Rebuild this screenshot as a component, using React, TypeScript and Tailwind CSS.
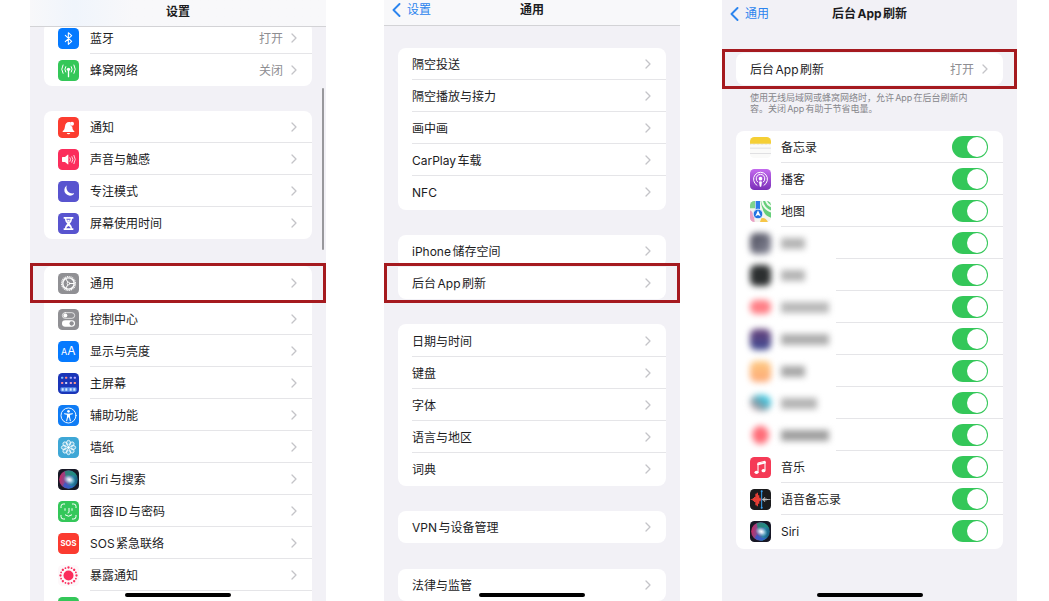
import { useId, type ReactNode } from "react";

function Tile({ color, children }: { color: string; children?: ReactNode }) {
  return (
    <svg viewBox="0 0 63 63" className="size-[21px] shrink-0" aria-hidden="true">
      <rect width="63" height="63" rx="13" fill={color} />
      {children}
    </svg>
  );
}

const line = {
  fill: "none",
  stroke: "#fff",
  strokeWidth: 3,
  strokeLinecap: "round" as const,
  strokeLinejoin: "round" as const,
};

const BluetoothIcon = () => (
  <Tile color="#057aff">
    <path d="M22 22 41 40 31 49V14L41 23 22 41" {...line} strokeWidth={3.2} />
  </Tile>
);

const CellularIcon = () => (
  <Tile color="#34c759">
    <circle cx="31.500" cy="28" r="5" fill="#fff" />
    <path d="M31.500 30V50" {...line} strokeWidth={4} />
    <path d="M23 20q-5 8 0 16M40 20q5 8 0 16" {...line} strokeWidth={3} />
    <path d="M15 15q-8 13 0 25M48 15q8 13 0 25" {...line} strokeWidth={3} />
  </Tile>
);

const BellIcon = () => (
  <Tile color="#fc3d30">
    <path d="M14 43c5-4 6-8 7-15 1-8 5-13 12-13 2 0 4 0 5 1a9 9 0 0 0 5 13c0 7 2 10 6 14v2H14z" fill="#fff" />
    <path d="M26 48h11q-2 4-5.500 4T26 48z" fill="#fff" />
    <circle cx="42" cy="20" r="6" fill="#fff" />
  </Tile>
);

const SoundIcon = () => (
  <Tile color="#fb2d5c">
    <path d="M12 26q0-2 2-2h7l8-7q2-1 2 1v27q0 2-2 1l-8-7h-7q-2 0-2-2z" fill="#fff" />
    <path d="M36 26q4 5 0 11M42 23q6 8 0 17M48 19q8 12 0 25" {...line} strokeWidth={2.4} />
  </Tile>
);

const MoonIcon = () => (
  <Tile color="#5854cf">
    <path d="M26 14c-3 12 5 25 21 23 1 0 1 1 1 2a17 17 0 1 1-23-25c1-1 1-1 1 0z" fill="#fff" />
  </Tile>
);

const HourglassIcon = () => (
  <Tile color="#5854cf">
    <path d="M17 12h29v5h-4c0 7-3 11-7 15 4 4 7 8 7 14h4v5H17v-5h4c0-6 3-10 7-14-4-4-7-8-7-15h-4z" fill="#fff" />
    <path d="M25 17h13q-1 6-6.500 11Q26 23 25 17zM25 46q1-5 6.500-7 5.500 2 6.500 7z" fill="#5854cf" />
    <path d="M27 20h9q-1 4-4.500 7Q28 24 27 20z" fill="#fff" />
  </Tile>
);

const GearIcon = () => (
  <Tile color="#909094">
    <circle cx="31.500" cy="31.500" r="20.500" fill="none" stroke="#fff" strokeWidth="4" strokeDasharray="3.300 2.067" />
    <circle cx="31.500" cy="31.500" r="17" fill="none" stroke="#fff" strokeWidth="4" />
    <circle cx="31.500" cy="31.500" r="4" {...line} strokeWidth={2.500} />
    <path d="M35.500 31.500H47M29.500 28 24 18M29.500 35 24 45" {...line} strokeWidth={3} />
  </Tile>
);

const ControlIcon = () => (
  <Tile color="#909094">
    <rect x="13" y="11" width="37" height="17" rx="8.500" {...line} strokeWidth={2.200} />
    <circle cx="22" cy="19.500" r="6" fill="#fff" />
    <rect x="12" y="34" width="39" height="19" rx="9.500" fill="#fff" />
    <circle cx="41" cy="43.500" r="6.500" fill="#909094" />
  </Tile>
);

const DisplayIcon = () => (
  <Tile color="#057aff">
    <text x="9" y="43" fill="#fff" fontSize="27" fontWeight="400">A</text>
    <text x="28" y="43" fill="#fff" fontSize="36" fontWeight="400">A</text>
  </Tile>
);

const dots = [
  [9, 11, "#7fc2ff"], [21, 11, "#ff8b86"], [35, 11, "#a9b2ff"], [47, 11, "#b7a5ff"],
  [9, 27, "#ff8c9b"], [21, 27, "#c9d4ff"], [35, 27, "#e5a0c8"], [47, 27, "#ff9a80"],
] as const;

const HomeIcon = () => (
  <Tile color="#1a35b8">
    {dots.map(([x, y, fill]) => (
      <rect key={`${x}-${y}`} x={x} y={y} width="7" height="6" rx="2" fill={fill} />
    ))}
    <rect x="7" y="43" width="49" height="13" rx="4" fill="#5a8cec" />
    <path d="M11 49.500h6M22 49.500h6M35 49.500h6M46 49.500h6" stroke="#d3ebff" strokeWidth="7" />
  </Tile>
);

const AccessibilityIcon = () => (
  <Tile color="#0f7cf5">
    <circle cx="31.500" cy="31.500" r="22.500" {...line} strokeWidth={2.800} />
    <circle cx="31.500" cy="19" r="4" fill="#fff" />
    <path d="M20 26q11.500 3 23 0M28.500 28v9L26 47M34.500 28v9L37 47" {...line} strokeWidth={3.200} />
    <path d="M28 26.500h7v11h-7z" fill="#fff" />
  </Tile>
);

const WallpaperIcon = () => (
  <Tile color="#3ea7d6">
    {[0, 45, 90, 135, 180, 225, 270, 315].map((angle) => (
      <ellipse
        key={angle}
        cx="31.500"
        cy="18"
        rx="6"
        ry="8"
        transform={`rotate(${angle} 31.500 31.500)`}
        fill="#fff"
        fillOpacity=".2"
        stroke="#fff"
        strokeWidth="2.400"
      />
    ))}
    <circle cx="31.500" cy="31.500" r="5.500" fill="#fff" stroke="#3ea7d6" strokeWidth="2" />
  </Tile>
);

function SiriIcon() {
  const id = useId();
  return (
    <Tile color="#171725">
      <defs>
        <linearGradient id={`${id}a`} x1="0" y1=".4" x2="1" y2=".6">
          <stop offset="0" stopColor="#c92860" />
          <stop offset=".45" stopColor="#6a5aa6" />
          <stop offset=".7" stopColor="#2c86a8" />
          <stop offset="1" stopColor="#175b7c" />
        </linearGradient>
        <radialGradient id={`${id}b`}>
          <stop offset="0" stopColor="#fff" />
          <stop offset=".35" stopColor="#d6e6f4" stopOpacity=".85" />
          <stop offset="1" stopColor="#8ec9e0" stopOpacity="0" />
        </radialGradient>
      </defs>
      <circle cx="31.500" cy="31.500" r="28" fill={`url(#${id}a)`} />
      <path d="M20 7a27 27 0 0 1 37 17C45 14 33 20 24 27z" fill="#1f8f78" opacity=".8" />
      <path d="M14 52a27 27 0 0 0 38-3c-13 5-24 0-31-9z" fill="#315bd0" opacity=".75" />
      <ellipse cx="34" cy="32" rx="19" ry="14" transform="rotate(25 34 32)" fill={`url(#${id}b)`} />
    </Tile>
  );
}

const FaceIdIcon = () => (
  <Tile color="#34c759">
    <path
      d="M9 20v-4q0-7 7-7h4M43 9h4q7 0 7 7v4M54 43v4q0 7-7 7h-4M20 54h-4q-7 0-7-7v-4M21 23v5M42 23v5M33 22v11q0 3-3 3M22 42q9.500 8 19 0"
      {...line}
    />
  </Tile>
);

const SosIcon = () => (
  <Tile color="#fb3b30">
    <text x="31.500" y="40" fill="#fff" fontSize="23" fontWeight="700" textAnchor="middle">SOS</text>
  </Tile>
);

const ExposureIcon = () => (
  <Tile color="#fdf8fa">
    <circle cx="31.500" cy="31.500" r="15" fill="#fb2d5c" />
    {Array.from({ length: 16 }, (_, i) => (
      <circle
        key={i}
        cx="31.500"
        cy="7.500"
        r={i % 2 ? 2.7 : 3.5}
        transform={`rotate(${i * 22.5} 31.500 31.500)`}
        fill="#fb2d5c"
      />
    ))}
  </Tile>
);

const BatteryIcon = () => (
  <Tile color="#34c759">
    <rect x="10" y="21" width="40" height="21" rx="6" fill="#fff" />
  </Tile>
);

const NotesIcon = () => (
  <Tile color="#fafaf9">
    <path d="M0 20v-7A13 13 0 0 1 13 0h37a13 13 0 0 1 13 13v7z" fill="#f5cf35" />
    <path d="M0 33.500h63M0 49.500h63" stroke="#d3d3d6" strokeWidth="2" />
    <path d="M1 21.500h61" stroke="#cbb886" strokeWidth="1.500" strokeDasharray="2 2" />
  </Tile>
);

function PodcastIcon() {
  const id = useId();
  return (
    <Tile color={`url(#${id})`}>
      <defs>
        <linearGradient id={id} x1="0" y1="0" x2="0" y2="1">
          <stop offset="0" stopColor="#c46aee" />
          <stop offset="1" stopColor="#7a2fb8" />
        </linearGradient>
      </defs>
      <path d="M21 49a21 21 0 1 1 21 0" {...line} />
      <path d="M23 39a13 13 0 1 1 17 0" {...line} />
      <circle cx="31.500" cy="29" r="5.500" fill="#fff" />
      <path d="M27 38q4.500-3 9 0l-2 14q-2.500 3-5 0z" fill="#fff" />
    </Tile>
  );
}

function MapsIcon() {
  const id = useId();
  return (
    <Tile color="#f4f4ee">
      <clipPath id={id}>
        <rect width="63" height="63" rx="13" />
      </clipPath>
      <g clipPath={`url(#${id})`}>
        <path d="M32 0h31v50q-14-3-21-16T32 0z" fill="#66cf7a" />
        <path d="M36 0q4 22 27 32M48 0q4 11 15 16" stroke="#f2faf0" strokeWidth="6" fill="none" />
        <path d="M0 0h15v22H0z" fill="#7ed28d" />
        <path d="M0 28q12 4 14 35H0z" fill="#e9a0c5" />
        <path d="M34 52q12-4 20 11H30z" fill="#f6c648" />
        <path d="M17 0h13v32H17z" fill="#2c7be8" />
        <circle cx="24" cy="39" r="14.500" fill="#2374e1" stroke="#fff" strokeWidth="2.500" />
        <path d="m24 28 8 18-8-4-8 4z" fill="#fff" />
      </g>
    </Tile>
  );
}

const MusicIcon = () => (
  <Tile color="#f53a56">
    <path d="M24 45V18l21-5v26" {...line} strokeWidth={3.200} />
    <path d="M24 22l21-5" {...line} strokeWidth={5} />
    <ellipse cx="19.500" cy="46" rx="6" ry="5" fill="#fff" />
    <ellipse cx="40.500" cy="41" rx="6" ry="5" fill="#fff" />
  </Tile>
);

const VoiceIcon = () => (
  <Tile color="#1b1b1d">
    <path d="M2 31.500h32" stroke="#ee4036" strokeWidth="2.400" />
    <path d="M10 27v9M14 24v15M18 14v35M22 11v41M26 19v25M30 26v11" stroke="#ee4036" strokeWidth="3.800" />
    <path d="M40 27v9M44 24v15M48 28v7M52 30v3M36 31.500h25" stroke="#d8d8d8" strokeWidth="2.200" />
    <path d="M35 5v53" stroke="#3aa0f0" strokeWidth="3" />
    <circle cx="35" cy="7" r="3" fill="#3aa0f0" />
    <circle cx="35" cy="56" r="3" fill="#3aa0f0" />
  </Tile>
);

const Chevron = () => (
  <svg viewBox="0 0 6 10" className="h-2.5 w-1.5 shrink-0" aria-hidden="true">
    <path d="m1 1 4 4-4 4" fill="none" stroke="#c4c4c8" strokeWidth="1.300" strokeLinecap="round" strokeLinejoin="round" />
  </svg>
);

type RowProps = { icon?: ReactNode; label?: string; value?: string; last?: boolean };

function Row({ icon, label, value, last }: RowProps) {
  return (
    <button type="button" aria-label={label ? undefined : "电池"} className="flex h-8 w-full items-center gap-[11px] pl-3.5 text-left">
      {icon}
      <span className={`flex flex-1 items-center gap-2 self-stretch border-b pr-[15px] ${last ? "border-transparent" : "border-[#e5e5e8]"}`}>
        <span className="flex-1 pt-0.5">{label}</span>
        {value && <span className="pt-0.5 text-[#8e8e92]">{value}</span>}
        <Chevron />
      </span>
    </button>
  );
}

const Card = ({ rows, className = "rounded-lg" }: { rows: RowProps[]; className?: string }) => (
  <div className={`mx-3.5 bg-white ${className}`}>
    {rows.map((row, i) => (
      <Row key={i} {...row} last={i === rows.length - 1} />
    ))}
  </div>
);

const Highlight = ({ row, className = "", inner = "" }: { row: RowProps; className?: string; inner?: string }) => (
  <div className={`relative border-3 border-[#a51a1f] bg-[#f2f1f6] ${className}`}>
    <div className={`mx-[11px] bg-white ${inner}`}>
      <Row {...row} last />
    </div>
  </div>
);

const Back = ({ children }: { children: string }) => (
  <a href="#" className="absolute left-2 flex items-center gap-1.5 text-[#2b84ee]">
    <svg viewBox="0 0 9 14" className="h-3.5 w-[9px]" aria-hidden="true">
      <path d="M7.500 1 1.500 7l6 6" fill="none" stroke="currentColor" strokeWidth="1.900" strokeLinecap="round" strokeLinejoin="round" />
    </svg>
    {children}
  </a>
);

const Phone = ({ className, children }: { className: string; children: ReactNode }) => (
  <section className={`relative flex h-screen min-w-0 flex-col overflow-hidden bg-[#f2f1f6] ${className}`}>
    {children}
    <div className="absolute bottom-1 left-1/2 h-1 w-[106px] -translate-x-1/2 rounded-full bg-black" />
  </section>
);

const apps: { name: string; icon: ReactNode }[] = [
  { name: "备忘录", icon: <NotesIcon /> },
  { name: "播客", icon: <PodcastIcon /> },
  { name: "地图", icon: <MapsIcon /> },
];

const hiddenApps = [
  { tone: "h-[21px] rounded-md bg-linear-to-br from-[#4c4d5c] to-[#8b8c9b]", text: "w-6 bg-[#b4b4b4]" },
  { tone: "h-[21px] rounded-md bg-[#2c2f30]", text: "w-6 bg-[#b4b4b4]" },
  { tone: "h-3.5 rounded-md bg-[#ff7f86]", text: "w-12 bg-[#b9b9b9]" },
  { tone: "h-[21px] rounded-md bg-linear-to-b from-[#653f78] to-[#3d4c94]", text: "w-12 bg-[#adadad]" },
  { tone: "h-[21px] rounded-md bg-linear-to-b from-[#fdc981] to-[#fda877]", text: "w-6 bg-[#a8a8a8]" },
  { tone: "h-4 rounded-full bg-linear-to-bl from-[#3cc4dd] from-30% via-[#7d98a4] via-60% to-[#fdc9c9]", text: "w-9 bg-[#b4b4b4]" },
  { tone: "h-[18px] rounded-full border-x-2 border-white bg-[#ff6d78] bg-clip-padding", text: "w-12 bg-[#9f9f9f]" },
];

const bottomApps: { name: string; icon: ReactNode }[] = [
  { name: "音乐", icon: <MusicIcon /> },
  { name: "语音备忘录", icon: <VoiceIcon /> },
  { name: "Siri", icon: <SiriIcon /> },
];

const Toggle = (props: { label?: string }) => (
  <input
    type="checkbox"
    role="switch"
    defaultChecked
    aria-label={props.label}
    className="h-[22px] w-9 shrink-0 appearance-none rounded-full bg-[#e9e9eb] p-px before:block before:size-5 before:rounded-full before:bg-white checked:bg-[#34c759] checked:before:ml-3.5"
  />
);

const AppRow = ({ name, icon, last }: { name: string; icon: ReactNode; last?: boolean }) => (
  <label className="flex h-8 items-center gap-2.5 pl-3.5">
    {icon}
    <span className={`flex flex-1 items-center justify-between self-stretch border-b pr-[15px] ${last ? "border-transparent" : "border-[#e5e5e8]"}`}>
      <span className="pt-0.5">{name}</span>
      <Toggle />
    </span>
  </label>
);

const HiddenRow = ({ tone, text }: { tone: string; text: string }) => (
  <div className="flex h-8 items-center pl-3.5">
    <div className="flex w-[86px] items-center gap-2.5">
      <div className={`w-[21px] blur-[3px] ${tone}`} />
      <div className={`h-[11px] blur-[3px] ${text}`} />
    </div>
    <div className="flex flex-1 items-center justify-end self-stretch border-b border-[#e5e5e8] pr-[15px]">
      <Toggle label="后台刷新" />
    </div>
  </div>
);

export default function App() {
  return (
    <main className="flex h-screen overflow-hidden bg-white pr-8 pl-[30px] font-['Inter','Noto_Sans_CJK_SC',sans-serif] text-xs leading-4 text-[#1c1c1e] [text-autospace:normal]" lang="zh-CN">
      <Phone className="mr-[58px] flex-[296_1_0%]">
        <header className="relative z-10 flex h-[27px] shrink-0 items-center justify-center border-b border-[#d3d3d6] bg-linear-to-r from-[#f8f8fa] via-[#f0f5fc] via-15% to-[#f8f8fa] to-35% pb-1">
          <h1 className="pt-0.5 font-bold">设置</h1>
        </header>
        <Card
          className="-mt-[5px] rounded-lg"
          rows={[
            { icon: <BluetoothIcon />, label: "蓝牙", value: "打开" },
            { icon: <CellularIcon />, label: "蜂窝网络", value: "关闭" },
          ]}
        />
        <Card
          className="mt-[25px] rounded-lg"
          rows={[
            { icon: <BellIcon />, label: "通知" },
            { icon: <SoundIcon />, label: "声音与触感" },
            { icon: <MoonIcon />, label: "专注模式" },
            { icon: <HourglassIcon />, label: "屏幕使用时间" },
          ]}
        />
        <Highlight className="mt-6" inner="rounded-t-lg py-px" row={{ icon: <GearIcon />, label: "通用" }} />
        <Card
          className=""
          rows={[
            { icon: <ControlIcon />, label: "控制中心" },
            { icon: <DisplayIcon />, label: "显示与亮度" },
            { icon: <HomeIcon />, label: "主屏幕" },
            { icon: <AccessibilityIcon />, label: "辅助功能" },
            { icon: <WallpaperIcon />, label: "墙纸" },
            { icon: <SiriIcon />, label: "Siri与搜索" },
            { icon: <FaceIdIcon />, label: "面容ID与密码" },
            { icon: <SosIcon />, label: "SOS紧急联络" },
            { icon: <ExposureIcon />, label: "暴露通知" },
            { icon: <BatteryIcon /> },
          ]}
        />
        <div className="absolute top-[88px] right-0.5 h-[162px] w-0.5 rounded-full bg-[#98989c]" />
      </Phone>

      <Phone className="mr-[42px] flex-[296_1_0%]">
        <header className="relative flex h-[26px] shrink-0 items-center justify-center border-b border-[#d3d3d6] bg-[#f8f8fa] pb-1.5">
          <Back>设置</Back>
          <h1 className="font-bold">通用</h1>
        </header>
        <Card
          className="mt-[22px] rounded-lg pb-0.5"
          rows={[
            { label: "隔空投送" },
            { label: "隔空播放与接力" },
            { label: "画中画" },
            { label: "CarPlay车载" },
            { label: "NFC" },
          ]}
        />
        <Card className="mt-[25px] rounded-lg" rows={[{ label: "iPhone储存空间" }]} />
        <Highlight className="-mt-1 py-px" inner="rounded-b-lg" row={{ label: "后台App刷新" }} />
        <Card
          className="mt-[21px] rounded-lg py-px"
          rows={[
            { label: "日期与时间" },
            { label: "键盘" },
            { label: "字体" },
            { label: "语言与地区" },
            { label: "词典" },
          ]}
        />
        <Card className="mt-[25px] rounded-lg" rows={[{ label: "VPN与设备管理" }]} />
        <Card className="mt-[26px] rounded-lg" rows={[{ label: "法律与监管" }]} />
      </Phone>

      <Phone className="flex-[295_1_0%]">
        <header className="relative flex h-[27px] shrink-0 items-center justify-center">
          <Back>通用</Back>
          <h1 className="font-bold">后台App刷新</h1>
        </header>
        <Highlight className="mt-[22px] py-px" inner="rounded-lg" row={{ label: "后台App刷新", value: "打开" }} />
        <p className="mx-7 mt-[3px] text-[9px] leading-[11px] text-[#86868b]">
          使用无线局域网或蜂窝网络时，允许App在后台刷新内
          <br />
          容。关闭App有助于节省电量。
        </p>
        <div className="mx-3.5 mt-[17px] rounded-lg bg-white pb-0.5">
          {apps.map((app) => (
            <AppRow key={app.name} {...app} />
          ))}
          {hiddenApps.map((app, i) => (
            <HiddenRow key={i} {...app} />
          ))}
          {bottomApps.map((app, i) => (
            <AppRow key={app.name} {...app} last={i === bottomApps.length - 1} />
          ))}
        </div>
      </Phone>
    </main>
  );
}
